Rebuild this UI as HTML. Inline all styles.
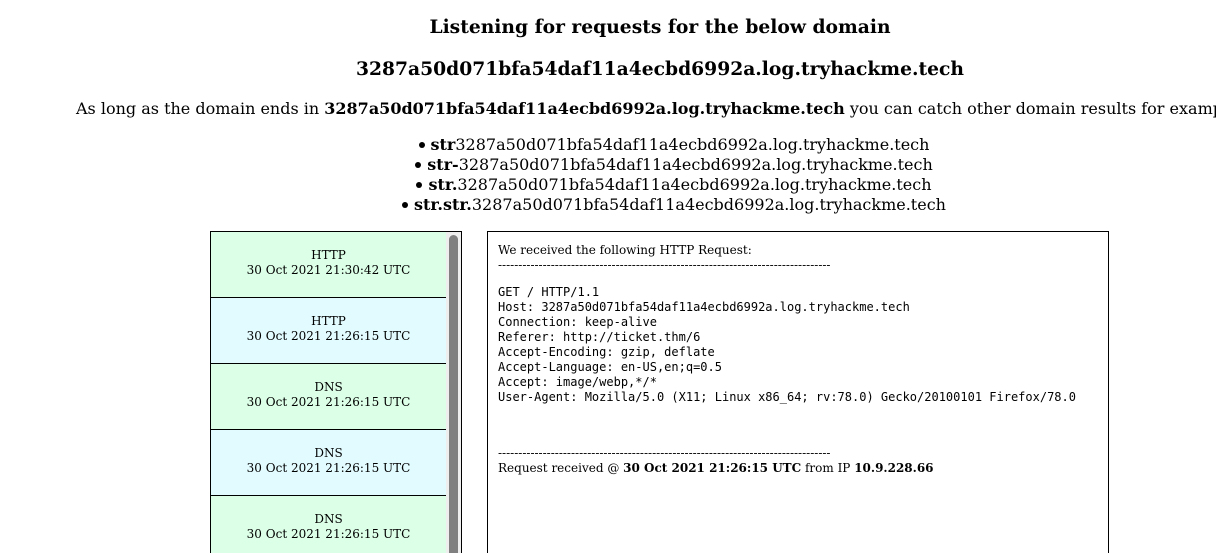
<!DOCTYPE html>
<html><head><style>
html,body{margin:0;width:1216px;height:553px;overflow:hidden}
body{background:#fff;font-family:"DejaVu Serif","Liberation Serif",serif;color:#000;position:relative}
.c{position:absolute;left:0;width:1320px;text-align:center;white-space:nowrap}
h3{margin:0;font-size:18.7px;font-weight:bold}
.p{font-size:16px}
.li{font-size:16px;line-height:20px}
.li span.b{display:inline-block;width:6px;height:6px;border-radius:50%;background:#000;vertical-align:middle;margin-right:6px;position:relative;top:-1px}
#left{position:absolute;left:210px;top:231px;width:250px;height:322px;border:1px solid #000;border-bottom:none;overflow:hidden;background:#eee}
.it{position:absolute;left:0;width:235px;height:65px;border-bottom:1px solid #000;font-size:12px;line-height:15px;text-align:center;box-sizing:content-box}
.it div{padding-top:16px}
.g{background:#dcffe7}.cy{background:#e2fbff}
#sb{position:absolute;left:238px;top:3px;width:9px;height:340px;border-radius:5px;background:#7f807f}
#right{position:absolute;left:487px;top:231px;width:620px;height:322px;border:1px solid #000;border-bottom:none}
.s{position:absolute;left:10px;font-size:12px;line-height:15px;white-space:nowrap}
pre{margin:0;font-family:"DejaVu Sans Mono","Liberation Mono",monospace;font-size:12px;line-height:15px}
</style></head><body>
<div class="c" style="top:16px"><h3>Listening for requests for the below domain</h3></div>
<div class="c" style="top:58px"><h3>3287a50d071bfa54daf11a4ecbd6992a.log.tryhackme.tech</h3></div>
<div class="c p" style="top:99px;left:76px;width:auto;text-align:left">As long as the domain ends in <b>3287a50d071bfa54daf11a4ecbd6992a.log.tryhackme.tech</b> you can catch other domain results for example:</div>
<div class="c li" style="top:135px;left:14px"><span class="b"></span><b>str</b>3287a50d071bfa54daf11a4ecbd6992a.log.tryhackme.tech</div>
<div class="c li" style="top:155px;left:14px"><span class="b"></span><b>str-</b>3287a50d071bfa54daf11a4ecbd6992a.log.tryhackme.tech</div>
<div class="c li" style="top:175px;left:14px"><span class="b"></span><b>str.</b>3287a50d071bfa54daf11a4ecbd6992a.log.tryhackme.tech</div>
<div class="c li" style="top:195px;left:14px"><span class="b"></span><b>str.str.</b>3287a50d071bfa54daf11a4ecbd6992a.log.tryhackme.tech</div>

<div id="left">
<div class="it g" style="top:0"><div>HTTP<br>30 Oct 2021 21:30:42 UTC</div></div>
<div class="it cy" style="top:66px"><div>HTTP<br>30 Oct 2021 21:26:15 UTC</div></div>
<div class="it g" style="top:132px"><div>DNS<br>30 Oct 2021 21:26:15 UTC</div></div>
<div class="it cy" style="top:198px"><div>DNS<br>30 Oct 2021 21:26:15 UTC</div></div>
<div class="it g" style="top:264px"><div>DNS<br>30 Oct 2021 21:26:15 UTC</div></div>
<div id="sb"></div>
</div>

<div id="right">
<div class="s" style="top:11px">We received the following HTTP Request:<br>----------------------------------------------------------------------------------</div>
<div class="s" style="top:53px"><pre>GET / HTTP/1.1
Host: 3287a50d071bfa54daf11a4ecbd6992a.log.tryhackme.tech
Connection: keep-alive
Referer: http://ticket.thm/6
Accept-Encoding: gzip, deflate
Accept-Language: en-US,en;q=0.5
Accept: image/webp,*/*
User-Agent: Mozilla/5.0 (X11; Linux x86_64; rv:78.0) Gecko/20100101 Firefox/78.0</pre></div>
<div class="s" style="top:214px">----------------------------------------------------------------------------------<br>Request received @ <b>30 Oct 2021 21:26:15 UTC</b> from IP <b>10.9.228.66</b></div>
</div>
</body></html>
